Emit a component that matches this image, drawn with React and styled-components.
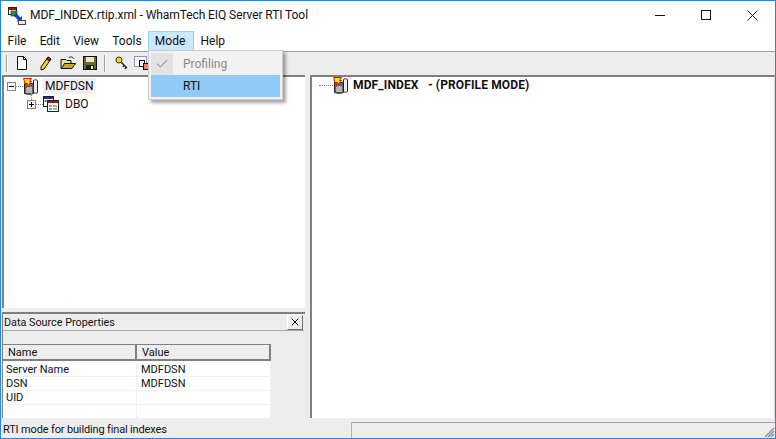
import React from "react";
import styled, { createGlobalStyle, css } from "styled-components";
import { Check, X } from "lucide-react";

const FONT = `"Roboto", "Liberation Sans", sans-serif`;

const dither = css`
  background: repeating-conic-gradient(#f2f2f2 0 25%, #e8e8e8 0 50%) 0 0 / 2px 2px;
`;

const Global = createGlobalStyle`
  html, body { margin: 0; padding: 0; background: #fff; }
  body { font-family: ${FONT}; font-size: 12px; color: #111; }
`;

const Win = styled.div`
  position: relative;
  box-sizing: border-box;
  width: 776px;
  height: 439px;
  border: 1px solid #2b86d6;
  display: flex;
  flex-direction: column;
  background: #fff;
  overflow: hidden;
`;

const TitleBar = styled.div`
  height: 30px;
  flex: none;
  display: flex;
  align-items: center;
  padding-left: 7px;
  font-size: 12px;
`;

const TitleText = styled.span`
  margin-left: 4px;
  flex: 1;
  position: relative;
  top: -1px;
  letter-spacing: -0.08px;
`;

const Caption = styled.div`
  width: 46px;
  height: 30px;
  display: flex;
  align-items: center;
  justify-content: center;
  position: relative;
  top: -1px;
`;

const CaptionIcon = styled.svg`
  width: 11px;
  height: 11px;
  shape-rendering: crispEdges;
`;

const MenuBar = styled.div`
  height: 20px;
  flex: none;
  display: flex;
  align-items: stretch;
`;

const MenuItem = styled.div`
  box-sizing: border-box;
  padding: 0 ${(p) => (p.$open ? "7.6px" : "5.6px")} 0 5.6px;
  display: flex;
  align-items: center;
  border: 1px solid ${(p) => (p.$open ? "#99d1f5" : "transparent")};
  background: ${(p) => (p.$open ? "#cce8ff" : "transparent")};
`;

const ToolBar = styled.div`
  box-sizing: border-box;
  height: 24px;
  flex: none;
  display: flex;
  align-items: center;
  ${dither}
  border-top: 1px solid #a0a0a0;
  padding: 0 0 1px 5px;
`;

const ToolSep = styled.div`
  width: 1px;
  height: 17px;
  background: #a0a0a0;
  border-right: 1px solid #fff;
  margin-right: ${(p) => p.$gap || 5}px;
`;

const ToolIcon = styled.svg`
  width: 16px;
  height: 16px;
  margin-right: ${(p) => p.$gap ?? 6}px;
  flex: none;
`;

const Body = styled.div`
  flex: 1;
  min-height: 0;
  display: flex;
  ${dither}
`;

const LeftCol = styled.div`
  width: 303px;
  flex: none;
  display: flex;
  flex-direction: column;
  margin-left: 1px;
`;

const Tree = styled.div`
  box-sizing: border-box;
  height: 233px;
  flex: none;
  background: #fff;
  border-top: 2px solid #808080;
  border-left: 2px solid #808080;
  padding-left: 3px;
`;

const TreeRow = styled.div`
  height: ${(p) => p.$h || 18}px;
  display: flex;
  align-items: center;
  padding-left: ${(p) => p.$indent || 0}px;
`;

const Expander = styled.span`
  box-sizing: border-box;
  width: 9px;
  height: 9px;
  border: 1px solid #808080;
  background: #fff;
  position: relative;
  flex: none;
  &::before {
    content: "";
    position: absolute;
    left: 1px;
    top: 3px;
    width: 5px;
    height: 1px;
    background: #000;
  }
  ${(p) =>
    p.$plus &&
    css`
      &::after {
        content: "";
        position: absolute;
        left: 3px;
        top: -8px;
        width: 1px;
        height: 14px;
        background:
          linear-gradient(#000, #000) 0 9px / 1px 5px no-repeat,
          repeating-linear-gradient(#808080 0 1px, transparent 1px 2px) 0 0 / 1px 7px no-repeat;
      }
    `}
`;

const Dots = styled.span`
  width: ${(p) => p.$w || 5}px;
  border-top: 1px dotted #808080;
  flex: none;
`;

const TreeLabel = styled.span`
  margin-left: ${(p) => p.$gap || 4}px;
  padding: 1px 2px;
  background: ${(p) => (p.$sel ? "#f0f0f0" : "transparent")};
  font-weight: ${(p) => (p.$bold ? 700 : 400)};
  letter-spacing: ${(p) => (p.$bold ? "0.13px" : "0")};
`;

const Props = styled.div`
  flex: 1;
  margin-top: 4px;
  border-top: 2px solid #808080;
  border-left: 1px solid #808080;
  display: flex;
  flex-direction: column;
  min-height: 0;
`;

const PropsHead = styled.div`
  height: 16px;
  flex: none;
  display: flex;
  align-items: center;
  justify-content: space-between;
  padding-left: 1px;
  font-size: 10.8px;
  border-bottom: 1px solid #a8a8a8;
  margin-right: 1px;
`;

const CloseBtn = styled.div`
  width: 14px;
  height: 13px;
  border: 1px solid #fff;
  border-right-color: #707070;
  border-bottom-color: #707070;
  display: flex;
  align-items: center;
  justify-content: center;
  margin-right: 1px;
`;

const Grid = styled.div`
  width: 268px;
  margin-top: 13px;
  background: #fff;
  flex: 1;
  display: flex;
  flex-direction: column;
  font-size: 11px;
`;

const GridHead = styled.div`
  height: 17px;
  flex: none;
  display: grid;
  grid-template-columns: 134px 134px;
  ${dither}
  margin-bottom: 2px;
`;

const HeadCell = styled.div`
  box-sizing: border-box;
  padding-left: 5px;
  display: flex;
  align-items: center;
  border-top: 1px solid #808080;
  border-bottom: 2px solid #808080;
  border-right: 2px solid #808080;
`;

const GridRow = styled.div`
  box-sizing: border-box;
  height: 14px;
  flex: none;
  display: grid;
  grid-template-columns: 134px 134px;
  border-bottom: 1px solid #f0f0f0;
`;

const Cell = styled.div`
  padding-left: ${(p) => p.$pad}px;
  line-height: 13px;
  border-right: 1px solid #f0f0f0;
`;

const Splitter = styled.div`
  width: 5px;
  flex: none;
`;

const RightPane = styled.div`
  flex: 1;
  background: #fff;
  border-top: 2px solid #808080;
  border-left: 2px solid #808080;
  border-right: 1px solid #d8d8d8;
  padding-left: 7px;
`;

const Status = styled.div`
  height: 20px;
  flex: none;
  display: flex;
  ${dither}
  font-size: 11px;
  position: relative;
`;

const StatusText = styled.div`
  width: 348px;
  padding: 4px 0 0 2px;
  line-height: 16px;
  letter-spacing: -0.15px;
`;

const StatusRest = styled.div`
  flex: 1;
  margin-top: 4px;
  border-top: 1px solid #a8a0b0;
  border-left: 1px solid #b0b0b0;
`;

const Grip = styled.svg`
  position: absolute;
  right: 0;
  bottom: 0;
  width: 12px;
  height: 12px;
`;

const DropMenu = styled.div`
  position: absolute;
  left: 147px;
  top: 49px;
  width: 135px;
  height: 50px;
  box-sizing: border-box;
  padding: 2px;
  background: #f2f2f2;
  border: 1px solid #cccccc;
  box-shadow: 3px 3px 3px rgba(0, 0, 0, 0.35);
`;

const DropItem = styled.div`
  height: 22px;
  display: flex;
  align-items: center;
  padding-left: 32px;
  color: ${(p) => (p.$off ? "#8a8a8a" : "#111")};
  background: ${(p) => (p.$active ? "#91c9f7" : "transparent")};
  position: relative;
`;

const CheckBox = styled.div`
  position: absolute;
  left: 0;
  top: 0;
  width: 22px;
  height: 22px;
  background: #e3e3e3;
  display: flex;
  align-items: center;
  justify-content: center;
`;

const DbIcon = () => (
  <svg width="16" height="17" viewBox="0 0 16 17" style={{ flex: "none" }}>
    <path d="M1.500 5.500h9v10c-2 1-7 1-9 0z" fill="#666" stroke="#222" />
    <rect x="3" y="9" width="6" height="6" fill="#b4b4b4" />
    <path d="M10.500 2.500c1-1 3-1 4 0v12c-1 1-3 1-4 0z" fill="#eee" stroke="#222" />
    <path d="M0.500 0.500h8l-2 3h2l-5 6 1-4h-2.500z" fill="#f7e600" stroke="#e01010" />
  </svg>
);

const SchemaIcon = () => (
  <svg width="16" height="16" viewBox="0 0 16 16" style={{ flex: "none" }}>
    <rect x="0.500" y="0.500" width="10" height="10" fill="#fff" stroke="#222" />
    <rect x="1" y="1" width="9" height="2" fill="#1530a0" />
    <rect x="1.500" y="4" width="2" height="2" fill="#20a030" />
    <rect x="4.500" y="4.500" width="11" height="11" fill="#fff" stroke="#222" />
    <rect x="5" y="5" width="10" height="2" fill="#a01515" />
    <path d="M6 10h3M6 13h3" stroke="#1530c0" />
    <path d="M10 10h4M10 13h4" stroke="#1a8a1a" />
  </svg>
);

const AppIcon = () => (
  <svg width="18" height="18" viewBox="0 0 18 18" style={{ flex: "none" }}>
    <rect x="0.500" y="0.500" width="8" height="7" fill="#fff" stroke="#222" />
    <rect x="1" y="1" width="7" height="2" fill="#a01515" />
    <rect x="3" y="4" width="6" height="5" fill="#2a9a3a" stroke="#222" strokeWidth="0.6" />
    <path d="M5 8l5 5-1.500 1.500H14V9l-1.500 1.500L8 6z" fill="#1040d8" />
    <rect x="10.500" y="13.500" width="7" height="4" fill="#e8e8e8" stroke="#444" />
  </svg>
);

const rows = [
  ["Server Name", "MDFDSN"],
  ["DSN", "MDFDSN"],
  ["UID", ""],
  ["", ""],
];

const App = () => {
  return (
    <>
      <Global />
      <Win>
        <TitleBar>
          <AppIcon />
          <TitleText>MDF_INDEX.rtip.xml - WhamTech EIQ Server RTI Tool</TitleText>
          <Caption>
            <CaptionIcon viewBox="0 0 11 11"><path d="M0 5.500h10" stroke="#111" /></CaptionIcon>
          </Caption>
          <Caption>
            <CaptionIcon viewBox="0 0 11 11"><rect x="0.500" y="0.500" width="9" height="9" fill="none" stroke="#111" /></CaptionIcon>
          </Caption>
          <Caption>
            <svg width="11" height="11" viewBox="0 0 11 11"><path d="M0.500 0.500l10 10M10.500 0.500l-10 10" stroke="#111" /></svg>
          </Caption>
        </TitleBar>
        <MenuBar>
          <MenuItem>File</MenuItem>
          <MenuItem>Edit</MenuItem>
          <MenuItem>View</MenuItem>
          <MenuItem>Tools</MenuItem>
          <MenuItem $open>Mode</MenuItem>
          <MenuItem>Help</MenuItem>
        </MenuBar>
        <ToolBar>
          <ToolSep $gap={6} />
          <ToolIcon viewBox="0 0 16 16" $gap={8}>
            <path d="M3.500 1.500h6l3 3v10h-9z" fill="#fff" stroke="#111" />
            <path d="M9.500 1.500v3h3" fill="none" stroke="#111" />
          </ToolIcon>
          <ToolIcon viewBox="0 0 16 16">
            <path d="M10 2l3 2-7 10-3 1 0-3z" fill="#f5d90a" stroke="#111" />
            <path d="M10 2l3 2-1.500 2-3-2z" fill="#b02030" stroke="#111" />
          </ToolIcon>
          <ToolIcon viewBox="0 0 16 16">
            <path d="M1 13.500v-9h5l1 1h4v8z" fill="#f2e08a" stroke="#111" />
            <path d="M1.500 13.500l3-5h11l-3.500 5z" fill="#c9a92e" stroke="#111" />
            <path d="M9 3c2-2 4-1 5 1" fill="none" stroke="#111" />
          </ToolIcon>
          <ToolIcon viewBox="0 0 16 16">
            <rect x="1.500" y="1.500" width="13" height="13" fill="#6a6a20" stroke="#111" />
            <rect x="4" y="2" width="8" height="5" fill="#e8e8d0" />
            <rect x="4" y="10" width="8" height="4" fill="#222" />
            <rect x="9" y="11" width="2" height="3" fill="#ddd" />
          </ToolIcon>
          <ToolSep $gap={8} />
          <ToolIcon viewBox="0 0 16 16" $gap={4}>
            <circle cx="5" cy="5" r="3" fill="#f5d90a" stroke="#333" />
            <path d="M7 7l6 6M10 10l-1 2M12 12l-1 2" stroke="#333" strokeWidth="1.600" />
          </ToolIcon>
          <ToolIcon viewBox="0 0 16 16">
            <rect x="0.500" y="1.500" width="12" height="10" fill="#fff" stroke="#1530a0" strokeDasharray="1 1" />
            <rect x="5.500" y="5.500" width="5" height="6" fill="#fff" stroke="#111" />
            <rect x="9.500" y="8.500" width="5" height="6" fill="#f08070" stroke="#111" />
          </ToolIcon>
        </ToolBar>
        <Body>
          <LeftCol>
            <Tree>
              <TreeRow>
                <Expander />
                <Dots $w={7} />
                <DbIcon />
                <TreeLabel $sel $gap={4}>MDFDSN</TreeLabel>
              </TreeRow>
              <TreeRow $indent={20}>
                <Expander $plus />
                <Dots $w={7} />
                <SchemaIcon />
                <TreeLabel $gap={4}>DBO</TreeLabel>
              </TreeRow>
            </Tree>
            <Props>
              <PropsHead>
                Data Source Properties
                <CloseBtn><X size={12} strokeWidth={2} color="#000" /></CloseBtn>
              </PropsHead>
              <Grid>
                <GridHead>
                  <HeadCell>Name</HeadCell>
                  <HeadCell>Value</HeadCell>
                </GridHead>
                {rows.map(([name, value], i) => (
                  <GridRow key={i}>
                    <Cell $pad={3}>{name}</Cell>
                    <Cell $pad={4}>{value}</Cell>
                  </GridRow>
                ))}
              </Grid>
            </Props>
          </LeftCol>
          <Splitter />
          <RightPane>
            <TreeRow $h={16}>
              <Dots $w={14} />
              <DbIcon />
              <TreeLabel $bold $gap={2}>MDF_INDEX &nbsp; - (PROFILE MODE)</TreeLabel>
            </TreeRow>
          </RightPane>
        </Body>
        <Status>
          <StatusText>RTI mode for building final indexes</StatusText>
          <StatusRest />
          <Grip viewBox="0 0 12 12">
            <path d="M11 2L2 11M11 5L5 11M11 8L8 11" stroke="#8a8a9a" strokeWidth="1.400" />
          </Grip>
        </Status>
        <DropMenu>
          <DropItem $off>
            <CheckBox><Check size={14} strokeWidth={2} color="#a0a0a0" /></CheckBox>
            Profiling
          </DropItem>
          <DropItem $active>RTI</DropItem>
        </DropMenu>
      </Win>
    </>
  );
};

export default App;
